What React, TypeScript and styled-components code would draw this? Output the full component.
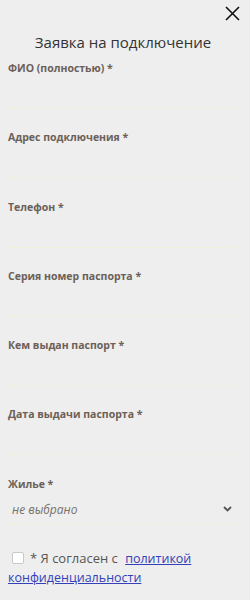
import React from "react";
import styled, { createGlobalStyle } from "styled-components";

const Global = createGlobalStyle`
  html, body { margin: 0; padding: 0; background: #eeeeee; }
  body { font-family: "Open Sans", "Noto Sans", sans-serif; }
`;

const Panel = styled.div`
  width: 250px;
  height: 600px;
  box-sizing: border-box;
  padding: 0 12px 0 8px;
  background: #eeeeee;
  position: relative;
`;

const Close = styled.button`
  position: absolute;
  top: 6px;
  right: 10px;
  width: 15px;
  height: 15px;
  padding: 0;
  border: 0;
  background: transparent;
  cursor: pointer;
  display: flex;
`;

const Title = styled.h2`
  margin: 0;
  padding-top: 32px;
  height: 61px;
  box-sizing: border-box;
  text-align: center;
  font-family: "Open Sans", sans-serif;
  font-weight: 400;
  font-size: 15px;
  line-height: 20px;
  color: #333333;
`;

const Field = styled.div`
  display: flex;
  flex-direction: column;
  padding-bottom: 21.3px;
`;

const Label = styled.label`
  font-family: "Open Sans", sans-serif;
  font-weight: 700;
  font-size: 10.5px;
  line-height: 15px;
  color: #6b6058;
`;

const Input = styled.input`
  height: 33px;
  box-sizing: border-box;
  border: 0;
  border-bottom: 1.5px solid #f1f0dc;
  background: transparent;
  outline: none;
  padding: 0;
  width: 100%;
`;

const SelectBox = styled.div`
  height: 32px;
  box-sizing: border-box;
  border-bottom: 1.5px solid #f1f0dc;
  display: flex;
  align-items: center;
  justify-content: space-between;
  padding: 4px 6px 0 4px;
`;

const Placeholder = styled.span`
  font-family: "Open Sans", sans-serif;
  font-style: italic;
  font-size: 12px;
  color: #77716c;
`;

const Agree = styled.div`
  margin-top: 4px;
  font-family: "Open Sans", sans-serif;
  font-size: 13px;
  line-height: 18px;
  color: #555555;
`;

const Box = styled.span`
  display: inline-block;
  width: 10px;
  height: 10px;
  border: 1px solid #c9c9c9;
  border-radius: 2px;
  background: #fff;
  margin: 0 6px 0 4px;
  vertical-align: -1px;
`;

const Link = styled.a`
  color: #3340b8;
  text-decoration: underline;
  font-weight: 400;
  font-size: 12.5px;
`;

const Gap = styled.span`
  display: inline-block;
  width: 4px;
`;

const fields = [
  "ФИО (полностью) *",
  "Адрес подключения *",
  "Телефон *",
  "Серия номер паспорта *",
  "Кем выдан паспорт *",
  "Дата выдачи паспорта *",
];

export default function App() {
  return (
    <>
      <Global />
      <Panel>
        <Close aria-label="close">
          <svg width="15" height="15" viewBox="0 0 15 15">
            <path d="M1 1 L14 14 M14 1 L1 14" stroke="#111" strokeWidth="1.6" fill="none" />
          </svg>
        </Close>
        <Title>Заявка на подключение</Title>
        {fields.map((f) => (
          <Field key={f}>
            <Label>{f}</Label>
            <Input />
          </Field>
        ))}
        <Field>
          <Label>Жилье *</Label>
          <SelectBox>
            <Placeholder>не выбрано</Placeholder>
            <svg width="9" height="6" viewBox="0 0 9 6">
              <path d="M1 1 L4.5 4.5 L8 1" stroke="#555" strokeWidth="1.8" fill="none" />
            </svg>
          </SelectBox>
        </Field>
        <Agree>
          <Box />* Я согласен с <Gap />
          <Link href="#">политикой</Link> <Link href="#">конфиденциальности</Link>
        </Agree>
      </Panel>
    </>
  );
}
